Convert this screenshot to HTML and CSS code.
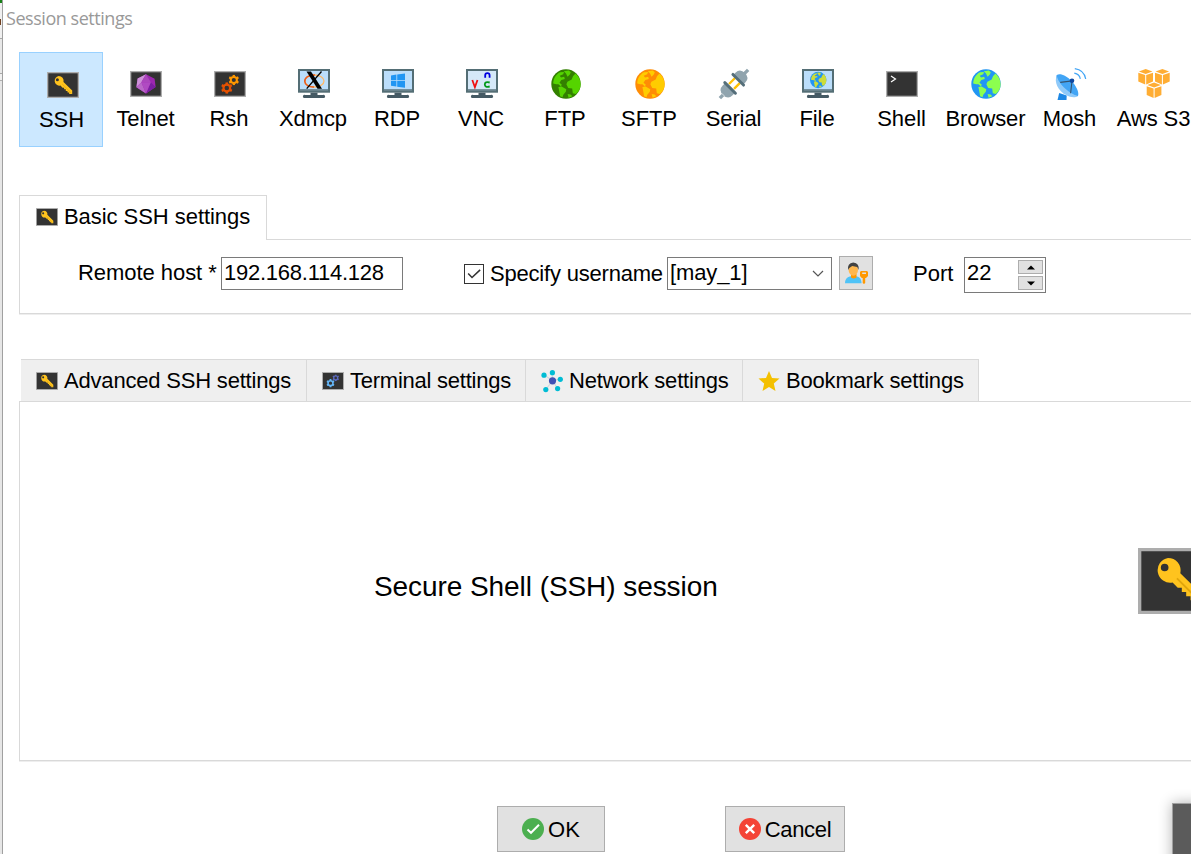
FILE: index.html
```
<!DOCTYPE html>
<html lang="en">
<head>
<meta charset="utf-8">
<title>Session settings</title>
<link rel="stylesheet" href="styles.css">
</head>
<body>
<svg class="defs" aria-hidden="true">
  <symbol id="key" viewBox="0 0 32 26">
    <path fill="#adadad" d="M0 0h32v26H0z"/><path fill="#333" d="M1.3 1.3h29.4v23.4H1.3z"/>
    <path fill="#ffc31e" fill-rule="evenodd" d="M11.700 3.900a4.900 4.900 0 0 1 4.800 6l8.700 8.700v3.500h-3v-1.500h-1.700v-1.600h-1.700v-1.700h-1.700v-1.600h-1.600l-2-2.100a4.900 4.900 0 1 1-1.800-9.700zM10.400 6.200a1.500 1.500 0 1 0 0 3 1.500 1.500 0 0 0 0-3z"/>
    <path stroke="#e0a50c" stroke-width=".7" d="m15.200 12 9.200 9.200"/>
  </symbol>
  <symbol id="gear" viewBox="-5 -5 10 10">
    <circle r="2.900" fill="none" stroke="currentColor" stroke-width="1.900"/>
    <path stroke="currentColor" stroke-width="2.200" d="M0-5v2M0 5V3M-4.300-2.500l1.700 1M4.300 2.500l-1.700-1M-4.300 2.500l1.700-1M4.300-2.500l-1.700 1"/>
  </symbol>
  <symbol id="land" viewBox="0 0 32 32">
    <path d="M3.200 15.500C3.300 10.800 6 6.200 10 4.300L14 4l-.8 2.200-3.500 1.600 1.300 1.600 3.200-.7.6 2.200-3.500 1.200-1.800 2.700 2.200 1.600-.7 2-2.600-2.100-2.200-.1zM13.800 3.200l5-.6 2 1.600-1 2.400-2.200 2.200-1.600-3.200zM8.400 19.100l3.200-.7 4.700 2.800-.5 2.500-2.500 3-.8 2.500-2.400-.9-.9-5.200zM23 8.300l2.400-2.800c3 2.300 5 6 5.200 10.400.1 4-1.700 7.700-4.800 10.200l-3-.8-.6-4.700-4-.6-1.800-3.700 1-2.600 4.300-2.100zM17.600 26.100l3 .3 1.700 1.800-3.700 1.500z"/>
  </symbol>
  <symbol id="monitor" viewBox="0 0 32 32">
    <path fill="#546e75" d="M0 1h32v23.700H0z"/><path fill="currentColor" d="M2 3h28v18.300H2z"/>
    <path fill="#455a64" d="M12.500 24.700h7v2.500h-7zM7.300 27h17.400a1.600 1.600 0 0 1 1.500 3H5.800a1.600 1.600 0 0 1 1.500-3z"/>
    <path fill="#78909c" d="M2 21.800h28v.8H2z"/>
  </symbol>
</svg>

<div class="backdrop"><i class="leaf"></i><i class="mark"></i></div>
<main class="dialog">
  <h1 class="title">Session settings</h1>

  <nav class="tools">
    <a class="tool selected"><svg class="icon" viewBox="0 0 32 32"><use href="#key" y="3" width="32" height="26"/></svg><span>SSH</span></a>
    <a class="tool"><svg class="icon" viewBox="0 0 32 32"><path fill="#adadad" d="M0 3h32v26H0z"/><path fill="#333" d="M1.3 4.3h29.4v23.4H1.3z"/><path fill="#9c27b0" d="m16 6.2 8.600 4.500 1 8.200L16 25.600 6.400 19.200l1.200-8.700z"/><path fill="#ce93d8" d="m16 6.200-4.600 8-5 5 1.200-8.700z"/><path fill="#ab47bc" d="m16 6.200 4.800 8h-9.400z"/><path fill="#ba68c8" d="M11.400 14.200 16 25.600l-9.600-6.400z"/><path fill="#7b1fa2" d="m20.800 14.200 4.800 4.700-9.600 6.700z"/><path fill="#b04bc2" d="M11.400 14.200h9.400L16 25.600z"/></svg><span>Telnet</span></a>
    <a class="tool"><svg class="icon" viewBox="0 0 32 32"><path fill="#adadad" d="M0 3h32v26H0z"/><path fill="#333" d="M1.3 4.3h29.4v23.4H1.3z"/><use href="#gear" class="amber" x="14.500" y="6.700" width="10.600" height="10.600"/><use href="#gear" class="rust" x="7" y="14.200" width="11.600" height="11.600"/></svg><span class="nudge">Rsh</span></a>
    <a class="tool"><svg class="icon" viewBox="0 0 32 32"><use href="#monitor" class="sky" width="32" height="32"/><ellipse cx="16.400" cy="13" rx="9.600" ry="6" fill="none" stroke="#ffb866" stroke-width="1.300"/><path d="M17 7C10 6.800 6.500 10 6.800 13.500 7 17 11 19.200 16 19" fill="none" stroke="#e85d20" stroke-width="1.600"/><path d="m8.500 3.500 4.500 0 11 17.200h-4.500z"/><path d="M23.500 3.500 8.700 20.600" stroke="#000" stroke-width="1.300"/></svg><span class="nudge">Xdmcp</span></a>
    <a class="tool"><svg class="icon" viewBox="0 0 32 32"><use href="#monitor" class="sky" width="32" height="32"/><path fill="#2196f3" d="m9 7.400 5.400-.8v5.600H9zM15.200 6.500 23 5.400v6.800h-7.800zM9 13h5.400v5.600L9 17.800zM15.200 13H23v6.800l-7.800-1.100z"/></svg><span class="nudge">RDP</span></a>
    <a class="tool"><svg class="icon" viewBox="0 0 32 32"><use href="#monitor" class="pale" width="32" height="32"/><g fill="none" stroke-width="1.800"><path stroke="#f01010" d="m6.300 12 2.600 7.200 2.600-7.200"/><path stroke="#0000e0" d="M19.200 9.700V7.500q0-2.300 2.200-2.300t2.200 2.300v2.200"/><path stroke="#00991a" d="M23.700 14.500q-4.900-1.100-4.900 2t4.900 2"/></g></svg><span class="nudge">VNC</span></a>
    <a class="tool"><svg class="icon" viewBox="0 0 32 32"><circle cx="16" cy="16" r="14.700" fill="#338000"/><use href="#land" fill="#55d400"/></svg><span class="nudge">FTP</span></a>
    <a class="tool"><svg class="icon" viewBox="0 0 32 32"><circle cx="16" cy="16" r="14.700" fill="#ff8c05"/><use href="#land" fill="#ffcc00"/></svg><span class="nudge">SFTP</span></a>
    <a class="tool"><svg class="icon" viewBox="0 0 32 32"><g transform="rotate(45 16 16)"><path fill="#90a4ae" d="M14.300-4h3.400v5h-3.400zM14.300 31h3.400v5h-3.400zM9 9.500V7q0-6.500 7-6.500T23 7v2.500zM9 22.500V25q0 6.500 7 6.500t7-6.500v-2.500z"/><path fill="#ffc107" d="M11.300 11h2.400v8.500h-2.400zM18.300 11h2.400v8.500h-2.400z"/><path stroke="#546e7a" stroke-width="3" stroke-linecap="round" d="M8.500 10h15M8.500 21.500h15"/></g></svg><span>Serial</span></a>
    <a class="tool"><svg class="icon" viewBox="0 0 32 32"><use href="#monitor" class="sky" width="32" height="32"/><circle cx="16.200" cy="12" r="8.200" fill="#2196f3"/><use href="#land" x="7.200" y="3" width="18" height="18" fill="#cddc39"/></svg><span class="nudge">File</span></a>
    <a class="tool"><svg class="icon" viewBox="0 0 32 32"><path fill="#adadad" d="M0 3h32v26H0z"/><path fill="#333" d="M1.300 4.300h29.400v23.400H1.300z"/><path d="m5 8 4.500 3L5 14" fill="none" stroke="#fff" stroke-width="1.200"/></svg><span>Shell</span></a>
    <a class="tool"><svg class="icon" viewBox="0 0 32 32"><circle cx="16" cy="16" r="14.700" fill="#2196f3"/><use href="#land" fill="#8cff4f"/></svg><span>Browser</span></a>
    <a class="tool"><svg class="icon" viewBox="0 0 32 32"><path fill="#1e88e5" d="m5.200 25 7.500 2.500-.2 4.500H3.500z"/><path fill="#90caf9" d="M2.800 7C-.2 14 3.800 22.500 12 27c5 2.700 9.500 2.700 12 .9L14 16z"/><path fill="#42a5f5" d="M2.800 7c3-2.300 9.500.500 14.500 5.700 5 5 8.200 12 6.700 15.200-3.500 1-9.500-2-14.200-6.800C4.500 15.800 1.800 10 2.800 7z"/><path fill="#90caf9" d="M2.800 7c-1.600 3.500 1.500 9.800 6.500 14.800 5 4.800 11.500 7.600 14.700 6.100C20 27.200 14.500 24 10 19.500 5.500 15 2.700 10 2.800 7z"/><path fill="none" stroke="#37536b" stroke-width="1.100" d="M6.200 14.400 18 13l-1.400 12.200"/><circle cx="18" cy="12.800" r="2.300" fill="#0d47a1"/><path fill="none" stroke="#42a5f5" stroke-width="1.200" d="M20.300 5.200q5.200 1 6 5.600M20.800.7Q30 2 31.700 11"/></svg><span>Mosh</span></a>
    <a class="tool"><svg class="icon" viewBox="0 0 32 32"><g fill="#ffad33"><path id="cube" d="M.3 4.700 7.200 7v9.500L.3 13.600zM8.200 7l6.800-2.300v8.900l-6.800 2.900zM.9 3.600l6.800-2.500 6.700 2.500L7.700 6z"/><use href="#cube" x="16.700"/><use href="#cube" x="8.400" y="13.500"/></g></svg><span>Aws S3</span></a>
  </nav>

  <section class="basic">
    <div class="basic-head">
      <div class="tab-open"><svg class="tab-icon" viewBox="0 0 32 26"><use href="#key"/></svg><span>Basic SSH settings</span></div>
      <div class="head-rule"></div>
    </div>
    <div class="basic-body">
      <label class="host-label">Remote host *</label>
      <div class="field host">192.168.114.128</div>
      <div class="check"><svg viewBox="0 0 20 20"><path d="m3.500 9.500 4.300 4.400 9-8.500" fill="none" stroke="#333" stroke-width="1.700"/></svg></div>
      <label class="user-label">Specify username</label>
      <div class="field user"><span>[may_1]</span><svg class="chevron" viewBox="0 0 12 8"><path d="m1 1 5 5 5-5" fill="none" stroke="#555" stroke-width="1.200"/></svg></div>
      <div class="user-button"><svg viewBox="0 0 24 24"><path fill="#4fc3f7" d="M1 22.300C1 17 4 15 9.500 15s8 2 8 7.300z"/><path fill="#ff9800" d="M7 13h5.500v3.500q-2.700 2-5.500 0z"/><ellipse cx="9.300" cy="9" rx="4.700" ry="5.800" fill="#ffb74d"/><path fill="#424242" d="M4.200 9Q3 2 9.300 1.500 15.700 2 14.500 9l-1.300-3-5-1L5.300 7z"/><path fill="#ff9800" fill-rule="evenodd" d="M17 10h6l1 1v4l-2 2h-.8v5l-1.200 1-1.300-1v-5h-.9L16 15v-4zm1.200 1.500V13H22v-1.500z"/></svg></div>
      <label class="port-label">Port</label>
      <div class="spin"><span>22</span><div class="steps"><b class="step"><svg viewBox="0 0 8 5"><path d="M0 4.500h8L4 .5z"/></svg></b><b class="step"><svg viewBox="0 0 8 5"><path d="M0 .5h8l-4 4z"/></svg></b></div></div>
    </div>
  </section>

  <section class="advanced">
    <div class="tabs">
      <div class="tab ssh"><svg class="tab-icon" viewBox="0 0 32 26"><use href="#key"/></svg><span>Advanced SSH settings</span></div>
      <div class="tab term"><svg class="tab-icon" viewBox="0 0 22 18"><path fill="#adadad" d="M0 0h22v18H0z"/><path fill="#333" d="M1 1h20v16H1z"/><use href="#gear" class="indigo" x="10.300" y="2.500" width="6.800" height="6.800"/><use href="#gear" class="blue" x="4.300" y="7" width="8.400" height="8.400"/></svg><span>Terminal settings</span></div>
      <div class="tab net"><svg class="tab-icon square" viewBox="0 0 22 22"><path fill="none" stroke="#cfd8dc" stroke-width="1.200" d="m3 5 8.500 5.500L11.300 2.500M11.500 10.500 19 9.200M11.500 10.500l5 8M11.500 10.500 5 19.500"/><circle cx="11.500" cy="10.800" r="3.600" fill="#3f51b5"/><g fill="#00bcd4"><circle cx="3" cy="5.200" r="2.600"/><circle cx="11.400" cy="2.700" r="2.600"/><circle cx="19.300" cy="9.300" r="2.600"/><circle cx="16.600" cy="18.600" r="2.600"/><circle cx="4.800" cy="19.600" r="2.600"/></g></svg><span>Network settings</span></div>
      <div class="tab mark-tab"><svg class="tab-icon square" viewBox="0 0 22 22"><path fill="#f4c000" d="m11 1 3 6.900 7.500.7-5.700 5 1.700 7.400L11 17.100 4.500 21l1.700-7.400-5.700-5 7.500-.7z"/></svg><span>Bookmark settings</span></div>
    </div>
    <div class="panel">
      <p class="session-name">Secure Shell (SSH) session</p>
      <svg class="big-key" viewBox="0 0 32 26" preserveAspectRatio="none"><use href="#key"/></svg>
    </div>
  </section>

  <footer class="actions">
    <button class="button ok"><svg viewBox="0 0 22 22"><circle cx="11" cy="11" r="11" fill="#4caf50"/><path d="m5.500 11.500 3.500 3.300 8-8" fill="none" stroke="#fff" stroke-width="2"/></svg><span>OK</span></button>
    <button class="button cancel"><svg viewBox="0 0 22 22"><circle cx="11" cy="11" r="11" fill="#f44336"/><path d="m6.800 6.800 8.400 8.400m0-8.400-8.400 8.400" stroke="#fff" stroke-width="2.400"/></svg><span>Cancel</span></button>
  </footer>
</main>
<div class="corner-window"></div>
</body>
</html>
```
FILE: styles.css
```
* { box-sizing: border-box; }
body {
  margin: 0;
  width: 1191px;
  height: 854px;
  overflow: hidden;
  display: flex;
  position: relative;
  background: #fff;
  color: #000;
  font: 22px/26px "Liberation Sans", Arial, sans-serif;
  white-space: nowrap;
}
svg { display: block; flex: none; overflow: visible; }
.defs { position: absolute; width: 0; height: 0; }

.backdrop {
  flex: 0 0 3px;
  border-right: 1px solid #a0a0a0;
  background: linear-gradient(#f0f0f0 38px, #a8a8a8 38px 39px, #e8e8e8 39px 73px, #a8a8a8 73px 74px, #f0f0f0 74px 80px, #b0b0b0 80px 81px, #e6e6e6 81px);
}
.leaf { display: block; height: 3px; background: #188018; }
.mark { display: block; height: 6px; width: 1px; margin-top: 16px; background: #704020; }

.dialog { flex: 0 0 1188px; height: 854px; overflow: hidden; }
.title {
  margin: 6px 0 0 3px;
  height: 46px;
  font: 400 18px/25px "Open Sans", sans-serif;
  letter-spacing: -.46px;
  color: #999;
}

.tools { display: flex; margin-left: 16px; width: 1200px; }
.tool {
  flex: 0 0 84px;
  height: 95px;
  padding-top: 16px;
  display: flex;
  flex-direction: column;
  align-items: center;
}
.tool .icon { width: 32px; height: 32px; margin-left: 2px; }
.tool span { margin-top: 6px; margin-left: 1px; letter-spacing: -.1px; }
.tool .nudge { margin-left: 0; }
.tool.selected { background: #cce8ff; border: 1px solid #99d1ff; }
.selected .icon { margin-left: 3px; }
.amber { color: #ff9800; }
.rust { color: #e65100; }
.sky { color: #bbdefb; }
.pale { color: #d5e8f8; }
.indigo { color: #5c6bc0; }
.blue { color: #64b5f6; }

.basic { margin: 48px 0 0 16px; }
.basic-head { display: flex; height: 45px; }
.tab-open {
  width: 248px;
  padding: 8px 0 0 16px;
  display: flex;
  gap: 6px;
  letter-spacing: -.05px;
  border: 1px solid #d9d9d9;
  border-bottom: 0;
}
.tab-icon { width: 22px; height: 18px; margin-top: 4px; }
.tab-icon.square { height: 22px; margin-top: 2px; }
.head-rule { flex: 1; border-bottom: 1px solid #d9d9d9; }
.basic-body {
  height: 74px;
  padding-top: 16px;
  display: flex;
  align-items: flex-start;
  border-left: 1px solid #d9d9d9;
  border-bottom: 1px solid #d9d9d9;
  box-shadow: 0 1px #eee;
}
.host-label { width: 143px; margin: 4px 0 0 58px; letter-spacing: -.05px; }
.field { height: 33px; margin-top: 1px; border: 1px solid #7a7a7a; padding: 2px; }
.host { width: 182px; letter-spacing: -.25px; }
.check { width: 20px; height: 20px; margin: 8px 6px 0 61px; border: 1px solid #333; }
.check svg { width: 18px; height: 18px; }
.user-label { width: 177px; margin-top: 5px; letter-spacing: -.2px; }
.user { width: 165px; display: flex; justify-content: space-between; }
.user span { letter-spacing: -.12px; }
.chevron { width: 12px; height: 8px; margin: 10px 5px 0 0; }
.user-button { width: 34px; height: 34px; margin-left: 7px; padding: 4px; background: #e1e1e1; border: 1px solid #adadad; }
.user-button svg { width: 24px; height: 24px; }
.port-label { width: 51px; margin: 5px 0 0 40px; }
.spin { width: 82px; height: 36px; margin-top: 1px; padding: 2px; display: flex; justify-content: space-between; border: 1px solid #7a7a7a; }
.steps { display: flex; flex-direction: column; gap: 2px; }
.step { width: 25px; height: 14px; display: flex; align-items: center; justify-content: center; background: #e1e1e1; border: 1px solid #adadad; }
.step svg { width: 8px; height: 5px; }

.advanced { margin: 45px 0 0 16px; }
.tabs { display: flex; height: 42px; padding-left: 2px; }
.tab { display: flex; gap: 6px; padding: 8px 0 0 15px; letter-spacing: -.19px; background: #efefef; border-top: 1px solid #d9d9d9; border-right: 1px solid #d9d9d9; }
.ssh { width: 286px; }
.term { width: 219px; letter-spacing: -.24px; }
.net { width: 217px; }
.mark-tab { width: 236px; }
.panel { height: 360px; display: flex; align-items: flex-start; border: 1px solid #d9d9d9; border-right: 0; box-shadow: 0 1px #eee; }
.session-name { flex: 0 0 764px; margin: 168px 0 0 354px; font-size: 28px; line-height: 34px; letter-spacing: -.07px; }
.big-key { width: 82px; height: 66px; margin-top: 146px; }

.actions { display: flex; margin: 45px 0 0 494px; gap: 120px; }
.button {
  height: 46px;
  padding: 0;
  display: flex;
  align-items: center;
  justify-content: center;
  gap: 4px;
  font: inherit;
  color: #000;
  background: #e1e1e1;
  border: 1px solid #adadad;
}
.button svg { width: 22px; height: 22px; }
.button span { padding-top: 1px; }
.ok { width: 108px; }
.cancel { width: 120px; letter-spacing: -.3px; }

.corner-window {
  position: absolute;
  left: 1172px;
  top: 803px;
  width: 40px;
  height: 70px;
  background: #5b5b5b;
  border: 1px solid #a0a0a0;
  box-shadow: 0 0 14px rgba(0, 0, 0, .3);
}
```
